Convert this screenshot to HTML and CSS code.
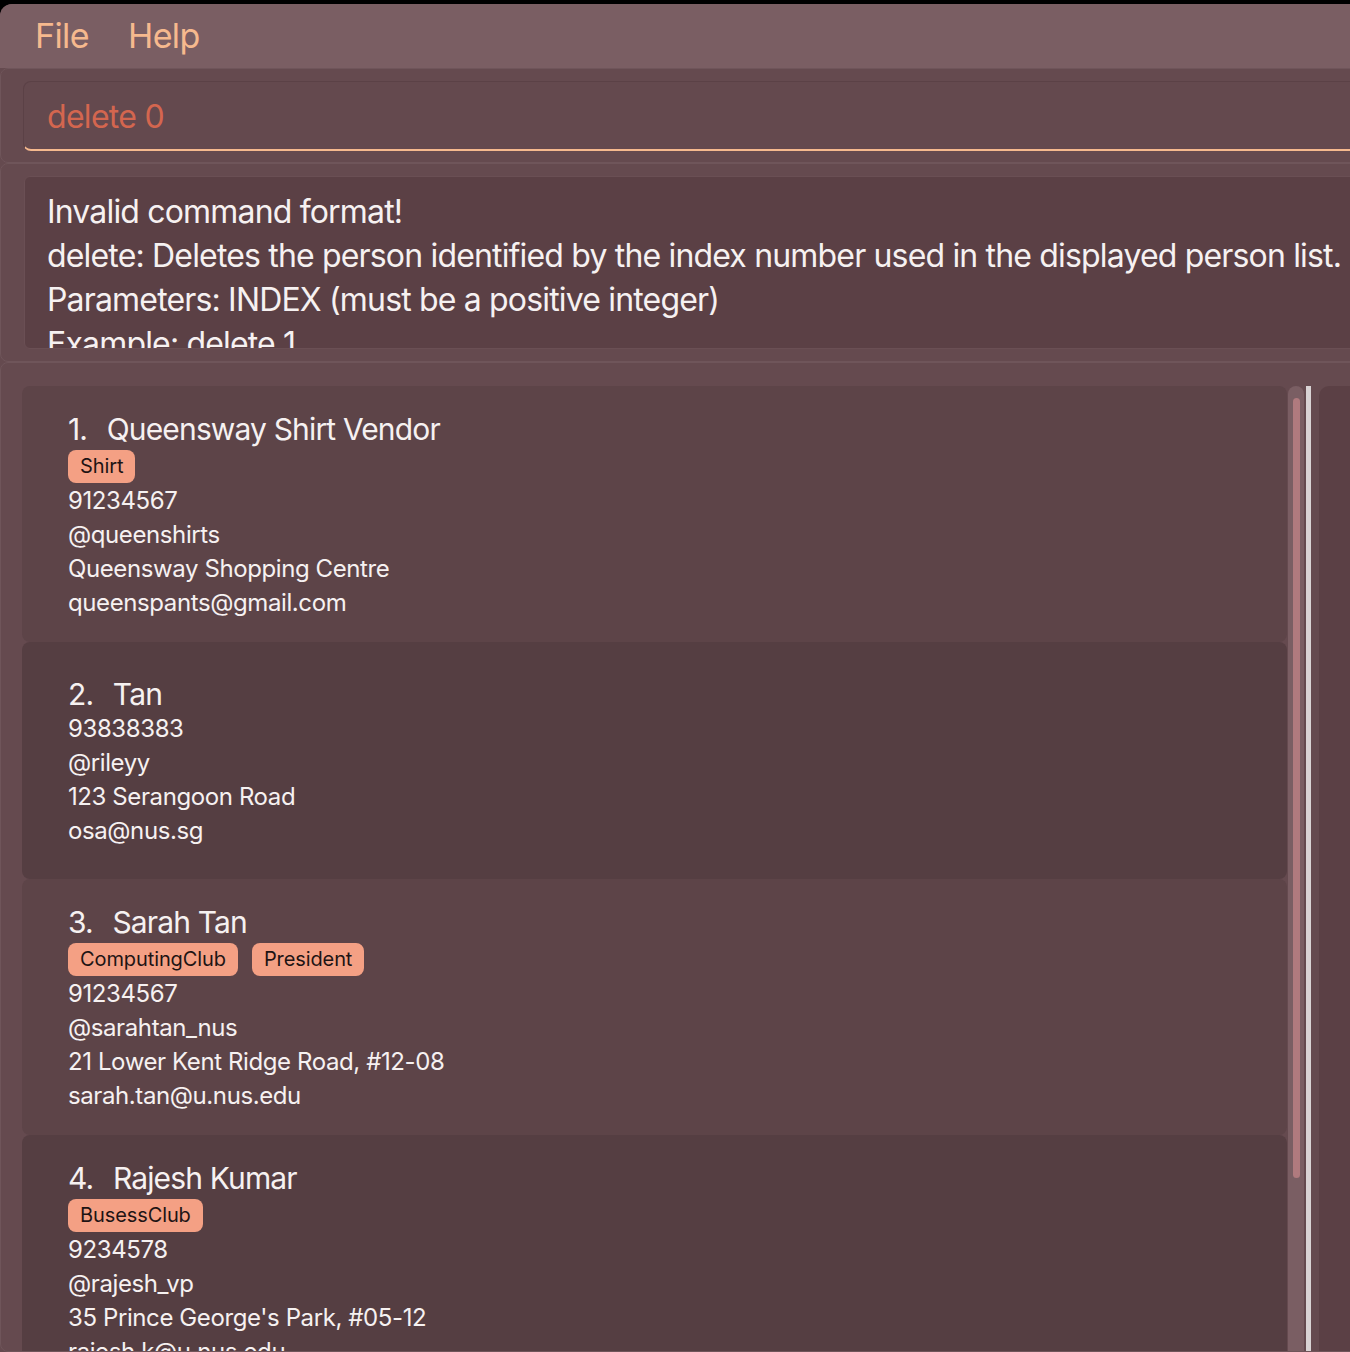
FILE: index.html
```html
<!DOCTYPE html>
<html>
<head>
<meta charset="utf-8">
<link rel="stylesheet" href="styles.css">
</head>
<body>
<div class="app">
  <div class="menubar">
    <span class="menu-item">File</span>
    <span class="menu-item">Help</span>
  </div>
  <div class="panel command-panel">
    <div class="command-box">delete 0</div>
  </div>
  <div class="panel result-panel">
    <div class="result-box">
      <div class="result-line">Invalid command format!</div>
      <div class="result-line">delete: Deletes the person identified by the index number used in the displayed person list.</div>
      <div class="result-line">Parameters: INDEX (must be a positive integer)</div>
      <div class="result-line">Example: delete 1</div>
    </div>
  </div>
  <div class="panel list-panel">
    <div class="list">
      <div class="card odd">
        <div class="name"><span class="idx">1.</span> Queensway Shirt Vendor</div>
        <div class="tags"><span class="tag">Shirt</span></div>
        <div class="field">91234567</div>
        <div class="field">@queenshirts</div>
        <div class="field">Queensway Shopping Centre</div>
        <div class="field">queenspants@gmail.com</div>
      </div>
      <div class="card even">
        <div class="name"><span class="idx">2.</span> Tan</div>
        <div class="field">93838383</div>
        <div class="field">@rileyy</div>
        <div class="field">123 Serangoon Road</div>
        <div class="field">osa@nus.sg</div>
      </div>
      <div class="card odd">
        <div class="name"><span class="idx">3.</span> Sarah Tan</div>
        <div class="tags"><span class="tag">ComputingClub</span><span class="tag">President</span></div>
        <div class="field">91234567</div>
        <div class="field">@sarahtan_nus</div>
        <div class="field">21 Lower Kent Ridge Road, #12-08</div>
        <div class="field">sarah.tan@u.nus.edu</div>
      </div>
      <div class="card even">
        <div class="name"><span class="idx">4.</span> Rajesh Kumar</div>
        <div class="tags"><span class="tag">BusessClub</span></div>
        <div class="field">9234578</div>
        <div class="field">@rajesh_vp</div>
        <div class="field">35 Prince George's Park, #05-12</div>
        <div class="field">rajesh.k@u.nus.edu</div>
      </div>
    </div>
    <div class="scroll-track"><div class="scroll-thumb"></div></div>
    <div class="divider"></div>
    <div class="side-panel"></div>
  </div>
</div>
</body>
</html>
```

FILE: styles.css
```css
html, body {
  margin: 0;
  padding: 0;
  height: 100%;
  overflow: hidden;
  background: #000;
}
body {
  padding-top: 4px;
  box-sizing: border-box;
  font-family: "Inter", "Noto Sans", sans-serif;
}
.app {
  width: 1390px;
  height: 1348px;
  display: flex;
  flex-direction: column;
  background: #654a4f;
  border-top-left-radius: 12px;
  overflow: hidden;
}
.menubar {
  height: 64px;
  flex: none;
  background: #7a5e63;
  display: flex;
  align-items: center;
  padding-left: 35px;
  gap: 39px;
  box-sizing: border-box;
}
.menu-item {
  font-size: 34px;
  letter-spacing: -0.6px;
  color: #f6b98e;
  line-height: 1;
  padding-bottom: 1px;
}
.panel {
  background: #654a4f;
  border: 1px solid #6f555a;
  border-radius: 8px;
  box-sizing: border-box;
  flex: none;
}
.command-panel {
  height: 95px;
  padding: 12px 0 0 22px;
}
.command-box {
  height: 70px;
  box-sizing: border-box;
  background: #64494e;
  border: 1px solid #5b4146;
  border-bottom: 2px solid #f6b98e;
  border-radius: 8px;
  padding-left: 23px;
  font-size: 32px;
  letter-spacing: -0.7px;
  line-height: 70px;
  color: #d4664f;
}
.result-panel {
  height: 199px;
  padding: 12px 0 0 23px;
}
.result-box {
  height: 173px;
  box-sizing: border-box;
  background: #5b4045;
  border: 1px solid #6a4f54;
  border-radius: 6px;
  padding: 13px 0 0 22px;
  overflow: hidden;
}
.result-line {
  font-size: 32px;
  line-height: 44px;
  color: #f6f1f1;
  white-space: nowrap;
  letter-spacing: -0.83px;
}
.list-panel {
  flex: 1;
  display: flex;
  padding: 23px 0 0 21px;
  overflow: hidden;
}
.list {
  width: 1265px;
  flex: none;
  display: flex;
  flex-direction: column;
}
.card {
  min-height: 237px;
  flex: none;
  box-sizing: border-box;
  padding: 25px 0 22px 46px;
  border-radius: 8px;
  display: flex;
  flex-direction: column;
  justify-content: center;
  color: #f6f1f1;
}
.card.odd { background: #5d4448; }
.card.even { background: #553e42; }
.name {
  font-size: 30px;
  line-height: 36px;
  letter-spacing: -0.85px;
  white-space: nowrap;
}
.idx {
  margin-right: 12px;
}
.tags {
  height: 37px;
  box-sizing: border-box;
  padding-top: 3px;
  display: flex;
  align-items: flex-start;
  gap: 14px;
}
.tag {
  height: 33px;
  box-sizing: border-box;
  background: #f4a084;
  color: #1e1414;
  font-size: 20px;
  line-height: 33px;
  padding: 0 12px;
  border-radius: 8px;
  letter-spacing: -0.1px;
}
.field {
  font-size: 24px;
  line-height: 34px;
  letter-spacing: -0.4px;
  white-space: nowrap;
}
.scroll-track {
  width: 16px;
  flex: none;
  margin-left: 1px;
  background: #7a5e63;
  border-radius: 8px 8px 0 0;
  padding-top: 12px;
  box-sizing: border-box;
  display: flex;
  justify-content: center;
}
.scroll-thumb {
  width: 7px;
  height: 780px;
  background: #b07a7e;
  border-radius: 4px;
}
.divider {
  width: 5px;
  flex: none;
  margin-left: 2px;
  background: #d9d3d4;
}
.side-panel {
  flex: none;
  width: 60px;
  margin-left: 8px;
  background: #5b4045;
  border-radius: 10px 0 0 0;
}
```
